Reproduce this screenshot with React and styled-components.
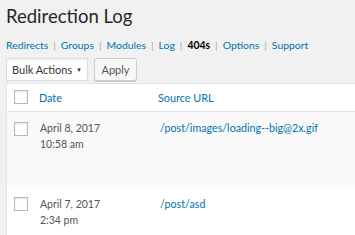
import React from "react";
import styled, { createGlobalStyle } from "styled-components";

const Global = createGlobalStyle`
  html, body { margin: 0; padding: 0; background: #f1f1f1; }
  body { font-family: Lato, "Open Sans", sans-serif; color: #444; overflow: hidden; }
  * { box-sizing: border-box; }
`;

const Wrap = styled.div`
  padding: 0 0 0 6px;
  width: 355px;
  height: 235px;
  overflow: hidden;
`;

const Title = styled.h1`
  margin: 0;
  padding-top: 3px;
  font-size: 18.5px;
  font-weight: 400;
  color: #23282d;
  line-height: 26px;
  height: 36px;
`;

const Nav = styled.ul`
  display: flex;
  margin: 0;
  padding: 0;
  list-style: none;
  font-size: 10.4px;
  line-height: 18px;
  color: #aaa;
  height: 22px;
  white-space: nowrap;
`;

const NavItem = styled.li`
  a {
    color: ${(p) => (p.$current ? "#000" : "#0073aa")};
    font-weight: ${(p) => (p.$current ? 700 : 400)};
    text-decoration: none;
  }
`;

const Sep = styled.span`
  padding: 0 5px 0 5px;
  color: #aaa;
`;

const Actions = styled.div`
  display: flex;
  gap: 6px;
  height: 25px;
  align-items: flex-start;
`;

const Select = styled.div`
  width: 82px;
  height: 23px;
  background: #fff;
  border: 1px solid #ddd;
  box-shadow: inset 0 1px 2px rgba(0, 0, 0, 0.07);
  display: flex;
  align-items: center;
  justify-content: space-between;
  padding: 0 5px 0 5px;
  font-size: 11px;
  color: #32373c;
  white-space: nowrap;
`;

const Caret = styled.span`
  font-size: 6px;
  color: #333;
`;

const Button = styled.div`
  width: 43px;
  height: 23px;
  background: #f7f7f7;
  border: 1px solid #ccc;
  border-radius: 3px;
  box-shadow: 0 1px 0 #ccc;
  display: flex;
  align-items: center;
  justify-content: center;
  font-size: 11px;
  color: #555;
`;

const Table = styled.div`
  background: #fff;
  border: 1px solid #e5e5e5;
  border-right: none;
  width: 360px;
`;

const Row = styled.div`
  display: grid;
  grid-template-columns: 32px 119px 1fr;
  background: ${(p) => (p.$alt ? "#f9f9f9" : "#fff")};
  height: ${(p) => p.$h}px;
  border-bottom: ${(p) => (p.$head ? "1px solid #e1e1e1" : "none")};
  align-items: start;
  padding-top: ${(p) => p.$pt}px;
`;

const Check = styled.span`
  display: block;
  width: 14px;
  height: 14px;
  margin-left: 7px;
  margin-top: ${(p) => p.$mt || 0}px;
  border: 1px solid #b4b9be;
  background: #fff;
  box-shadow: inset 0 1px 2px rgba(0, 0, 0, 0.1);
`;

const HeadLink = styled.a`
  color: #0073aa;
  font-size: 10.8px;
  line-height: 18px;
  text-decoration: none;
`;

const DateCell = styled.div`
  font-size: 10.5px;
  line-height: 16px;
  color: #555;
  padding-left: 1px;
`;

const Url = styled.a`
  color: #0073aa;
  font-size: 10.7px;
  line-height: 16px;
  text-decoration: none;
  padding-left: 2px;
`;

const links = ["Redirects", "Groups", "Modules", "Log", "404s", "Options", "Support"];

export default function App() {
  return (
    <>
      <Global />
      <Wrap>
        <Title>Redirection Log</Title>
        <Nav>
          {links.map((l, i) => (
            <NavItem key={l} $current={l === "404s"}>
              <a href="#">{l}</a>
              {i < links.length - 1 && <Sep>|</Sep>}
            </NavItem>
          ))}
        </Nav>
        <Actions>
          <Select>
            Bulk Actions <Caret>▼</Caret>
          </Select>
          <Button>Apply</Button>
        </Actions>
        <Table>
          <Row $head $h={28} $pt={5}>
            <Check $mt={1} />
            <HeadLink>Date</HeadLink>
            <HeadLink>Source URL</HeadLink>
          </Row>
          <Row $alt $h={75} $pt={8}>
            <Check $mt={2} />
            <DateCell>
              April 8, 2017
              <br />
              10:58 am
            </DateCell>
            <Url href="#">/post/images/loading--big@2x.gif</Url>
          </Row>
          <Row $h={60} $pt={9}>
            <Check $mt={1} />
            <DateCell>
              April 7, 2017
              <br />
              2:34 pm
            </DateCell>
            <Url href="#">/post/asd</Url>
          </Row>
        </Table>
      </Wrap>
    </>
  );
}
